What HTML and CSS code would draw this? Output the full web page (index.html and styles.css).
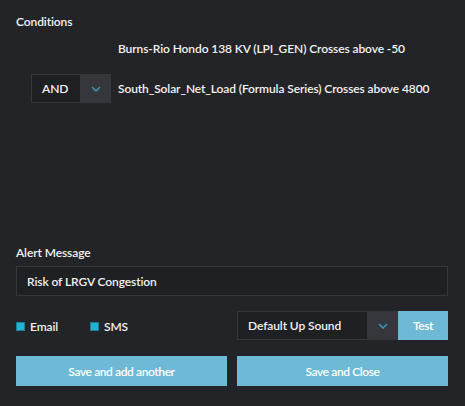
FILE: index.html
```html
<!DOCTYPE html>
<html lang="en">
<head>
    <meta charset="UTF-8">
    <title>Alert</title>
    <link rel="stylesheet" href="styles.css">
</head>
<body>
    <div class="alert-form">
        <div class="conditions">
            <h3 class="field-label">Conditions</h3>
            <div class="condition-row">
                <div class="operator-slot"></div>
                <span class="condition-text">Burns-Rio Hondo 138 KV (LPI_GEN) Crosses above -50</span>
            </div>
            <div class="condition-row">
                <div class="operator-slot">
                    <div class="select operator-select">
                        <span class="select-value">AND</span>
                        <span class="select-arrow">
                            <svg width="10" height="6" viewBox="0 0 10 6" fill="none" stroke="currentColor" stroke-width="1.6">
                                <path d="M1 1l4 4 4-4"/>
                            </svg>
                        </span>
                    </div>
                </div>
                <span class="condition-text">South_Solar_Net_Load (Formula Series) Crosses above 4800</span>
            </div>
        </div>

        <label class="field-label" for="message">Alert Message</label>
        <input id="message" class="text-input" type="text" value="Risk of LRGV Congestion">

        <div class="options-row">
            <div class="checks">
                <label class="check"><span class="check-box"></span>Email</label>
                <label class="check"><span class="check-box"></span>SMS</label>
            </div>
            <div class="sound-group">
                <div class="select sound-select">
                    <span class="select-value">Default Up Sound</span>
                    <span class="select-arrow">
                        <svg width="10" height="6" viewBox="0 0 10 6" fill="none" stroke="currentColor" stroke-width="1.6">
                            <path d="M1 1l4 4 4-4"/>
                        </svg>
                    </span>
                </div>
                <button class="btn btn-test">Test</button>
            </div>
        </div>

        <div class="actions">
            <button class="btn">Save and add another</button>
            <button class="btn">Save and Close</button>
        </div>
    </div>
</body>
</html>
```

FILE: styles.css
```css
* {
    margin: 0;
    padding: 0;
    box-sizing: border-box;
}

body {
    font-family: 'Lato', 'Liberation Sans', sans-serif;
    font-size: 12px;
    font-weight: 600;
    letter-spacing: -0.1px;
    background: #232428;
    color: #f2f2f2;
    height: 406px;
}

.alert-form {
    height: 100%;
    padding: 14px 17px 20px 16px;
    display: flex;
    flex-direction: column;
}

.conditions {
    flex: 1;
}

.field-label {
    display: block;
    font-size: 12px;
    font-weight: 600;
    line-height: 16px;
}

.conditions .field-label {
    margin-bottom: 4px;
}

.condition-row {
    display: flex;
    align-items: center;
    height: 29px;
    margin-bottom: 11px;
}

.operator-slot {
    width: 102px;
    padding-left: 15px;
    flex-shrink: 0;
}

.select {
    display: flex;
    height: 29px;
    background: #1f2024;
    border: 1px solid #36373c;
}

.select-value {
    flex: 1;
    display: flex;
    align-items: center;
}

.select-arrow {
    width: 31px;
    display: flex;
    align-items: center;
    justify-content: center;
    background: #35373c;
    color: #3b93ad;
    margin: -1px -1px -1px 0;
}

.operator-select {
    width: 80px;
}

.operator-select .select-value {
    padding-left: 10px;
}

.text-input {
    margin-top: 5px;
    height: 30px;
    width: 100%;
    background: #1f2024;
    border: 1px solid #36373c;
    color: #f2f2f2;
    font: inherit;
    letter-spacing: inherit;
    padding: 0 10px;
    outline: none;
}

.options-row {
    display: grid;
    grid-template-columns: 1fr 1fr;
    gap: 10px;
    margin-top: 15px;
    align-items: center;
}

.checks {
    display: flex;
    padding-top: 2px;
}

.check {
    display: flex;
    align-items: center;
    width: 74px;
}

.check-box {
    width: 9px;
    height: 9px;
    background: #24b4d2;
    border: 1px solid #1a7e96;
    margin-right: 5px;
}

.sound-group {
    display: flex;
    height: 29px;
}

.sound-select {
    flex: 1;
}

.sound-select .select-value {
    padding-left: 10px;
}

.btn {
    background: #6eb9d5;
    color: #ffffff;
    border: none;
    font: inherit;
    letter-spacing: -0.4px;
    cursor: pointer;
}

.btn-test {
    width: 50px;
    height: 29px;
}

.actions {
    display: grid;
    grid-template-columns: 1fr 1fr;
    gap: 10px;
    margin-top: 16px;
}

.actions .btn {
    height: 30px;
}
```
